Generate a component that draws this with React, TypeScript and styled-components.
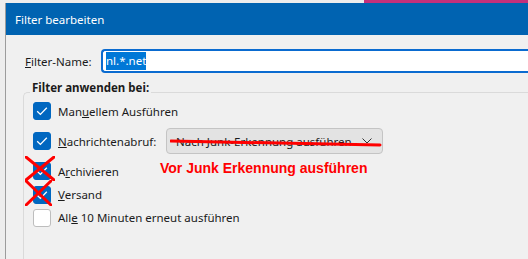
import styled, { createGlobalStyle } from 'styled-components';

const GlobalStyle = createGlobalStyle`
  html, body {
    margin: 0;
    padding: 0;
    background: #ededed;
    overflow: hidden;
  }
  body {
    font-family: 'Noto Sans', 'Open Sans', sans-serif;
    font-size: 11.5px;
    color: #1b1b1b;
  }
`;

function CheckIcon() {
  return (
    <svg width="18" height="18" viewBox="0 0 18 18">
      <path d="M4.2 9.2 L7.4 12.4 L13.8 5.8" fill="none" stroke="#fff" strokeWidth="1.3" />
    </svg>
  );
}

function ChevronIcon() {
  return (
    <svg width="10" height="6" viewBox="0 0 10 6">
      <path d="M0.5 0.5 L5 5 L9.5 0.5" fill="none" stroke="#333" strokeWidth="1" />
    </svg>
  );
}

function RedCross({ w, h }: { w: number; h: number }) {
  return (
    <CrossSvg width={w} height={h} viewBox={`0 0 ${w} ${h}`}>
      <path d={`M1 1 L${w - 1} ${h - 1} M${w - 1} 1 L1 ${h - 1}`} stroke="#ff0000" strokeWidth="3" strokeLinecap="round" />
    </CrossSvg>
  );
}

function Box({ checked, cross }: { checked: boolean; cross?: { w: number; h: number } }) {
  return (
    <BoxWrap>
      <CheckBox $checked={checked}>{checked && <CheckIcon />}</CheckBox>
      {cross && <RedCross w={cross.w} h={cross.h} />}
    </BoxWrap>
  );
}

function App() {
  return (
    <>
      <GlobalStyle />
      <Page>
        <TopStrip>
          <Spacer />
          <PinkBar />
        </TopStrip>
        <Window>
          <TitleBar>Filter bearbeiten</TitleBar>
          <Body>
            <NameRow>
              <NameLabel>
                <u>F</u>ilter-Name:
              </NameLabel>
              <NameInput>
                <Selected>nl.*.net</Selected>
              </NameInput>
            </NameRow>

            <Group>
              <Legend>Filter anwenden bei:</Legend>
              <Rows>
                <Row $h={22}>
                  <Box checked />
                  <Label>
                    Man<u>u</u>ellem Ausführen
                  </Label>
                </Row>
                <Row $h={30} $mt={4}>
                  <Box checked />
                  <Label $w={101}>
                    <u>N</u>achrichtenabruf:
                  </Label>
                  <Dropdown>
                    <span>Nach Junk-Erkennung ausführen</span>
                    <ChevronIcon />
                    <Strike width="212" height="8" viewBox="0 0 212 8">
                      <path d="M1 2 L210 6" stroke="#ff0000" strokeWidth="3" strokeLinecap="round" />
                    </Strike>
                  </Dropdown>
                </Row>
                <Row $h={24} $mt={3}>
                  <Box checked cross={{ w: 30, h: 25 }} />
                  <Label>
                    A<u>r</u>chivieren
                  </Label>
                  <Note>Vor Junk Erkennung ausführen</Note>
                </Row>
                <Row $h={23}>
                  <Box checked cross={{ w: 27, h: 26 }} />
                  <Label>
                    <u>V</u>ersand
                  </Label>
                </Row>
                <Row $h={23}>
                  <Box checked={false} />
                  <Label>
                    All<u>e</u> 10 Minuten erneut ausführen
                  </Label>
                </Row>
              </Rows>
            </Group>
          </Body>
        </Window>
      </Page>
    </>
  );
}

const Page = styled.div`
  width: 528px;
  height: 259px;
  display: flex;
  flex-direction: column;
  overflow: hidden;
`;

const TopStrip = styled.div`
  height: 3px;
  display: flex;
  flex-shrink: 0;
`;

const Spacer = styled.div`
  flex: 1;
`;

const PinkBar = styled.div`
  width: 164px;
  background: #c4307b;
`;

const Window = styled.div`
  flex: 1;
  margin-left: 5px;
  border-left: 1px solid #9c9c9c;
  background: #f0f0f0;
  display: flex;
  flex-direction: column;
  min-width: 0;
`;

const TitleBar = styled.div`
  height: 32px;
  flex-shrink: 0;
  background: #0063b1;
  color: #fff;
  display: flex;
  align-items: center;
  padding-left: 9px;
`;

const Body = styled.div`
  padding: 14px 0 0 17px;
  display: flex;
  flex-direction: column;
`;

const NameRow = styled.div`
  display: flex;
  align-items: center;
  height: 24px;
  padding-left: 2px;
`;

const NameLabel = styled.span`
  width: 76px;
  flex-shrink: 0;
`;

const NameInput = styled.div`
  flex: 1;
  height: 24px;
  box-sizing: border-box;
  border: 2px solid #0a6bd0;
  border-right: none;
  border-radius: 4px 0 0 4px;
  background: #fff;
  padding-left: 3px;
  display: flex;
  align-items: center;
`;

const Selected = styled.span`
  background: #0078d7;
  color: #fff;
  line-height: 18px;
`;

const Group = styled.div`
  margin-top: 19px;
  border-top: 1px solid #dadada;
  border-left: 1px solid #dadada;
  border-top-left-radius: 5px;
  flex-shrink: 0;
  height: 200px;
`;

const Legend = styled.div`
  width: fit-content;
  margin: -12px 0 0 6px;
  padding: 0 2px;
  background: #f0f0f0;
  font-weight: bold;
  line-height: 14px;
`;

const Rows = styled.div`
  position: relative;
  display: flex;
  flex-direction: column;
  padding: 5px 0 0 9px;
`;

const Row = styled.div<{ $h: number; $mt?: number }>`
  position: relative;
  display: flex;
  align-items: center;
  gap: 7px;
  height: ${(p) => p.$h}px;
  margin-top: ${(p) => p.$mt || 0}px;
`;

const BoxWrap = styled.div`
  position: relative;
  width: 18px;
  height: 18px;
  flex-shrink: 0;
`;

const CheckBox = styled.div<{ $checked: boolean }>`
  width: 18px;
  height: 18px;
  box-sizing: border-box;
  border-radius: 3px;
  background: ${(p) => (p.$checked ? '#0067c0' : '#ffffff')};
  border: 1px solid ${(p) => (p.$checked ? '#0067c0' : '#bdbdbd')};
  display: flex;
  align-items: center;
  justify-content: center;

  & > svg {
    margin: -1px;
  }
`;

const CrossSvg = styled.svg`
  position: absolute;
  left: -8px;
  top: -6px;
`;

const Label = styled.span<{ $w?: number }>`
  white-space: nowrap;
  ${(p) => (p.$w ? `width: ${p.$w}px; flex-shrink: 0;` : '')}
`;

const Dropdown = styled.div`
  position: relative;
  width: 217px;
  height: 26px;
  box-sizing: border-box;
  border: 1px solid #c4c4c4;
  border-radius: 4px;
  background: #e3e3e3;
  display: flex;
  align-items: center;
  justify-content: space-between;
  padding: 0 10px 0 9px;
  white-space: nowrap;
`;

const Strike = styled.svg`
  position: absolute;
  left: 3px;
  top: 10px;
`;

const Note = styled.span`
  position: absolute;
  left: 127px;
  top: 1px;
  color: #ff0000;
  font-family: 'Liberation Sans', Arial, sans-serif;
  font-weight: bold;
  font-size: 14px;
  white-space: nowrap;
`;

export default App;
